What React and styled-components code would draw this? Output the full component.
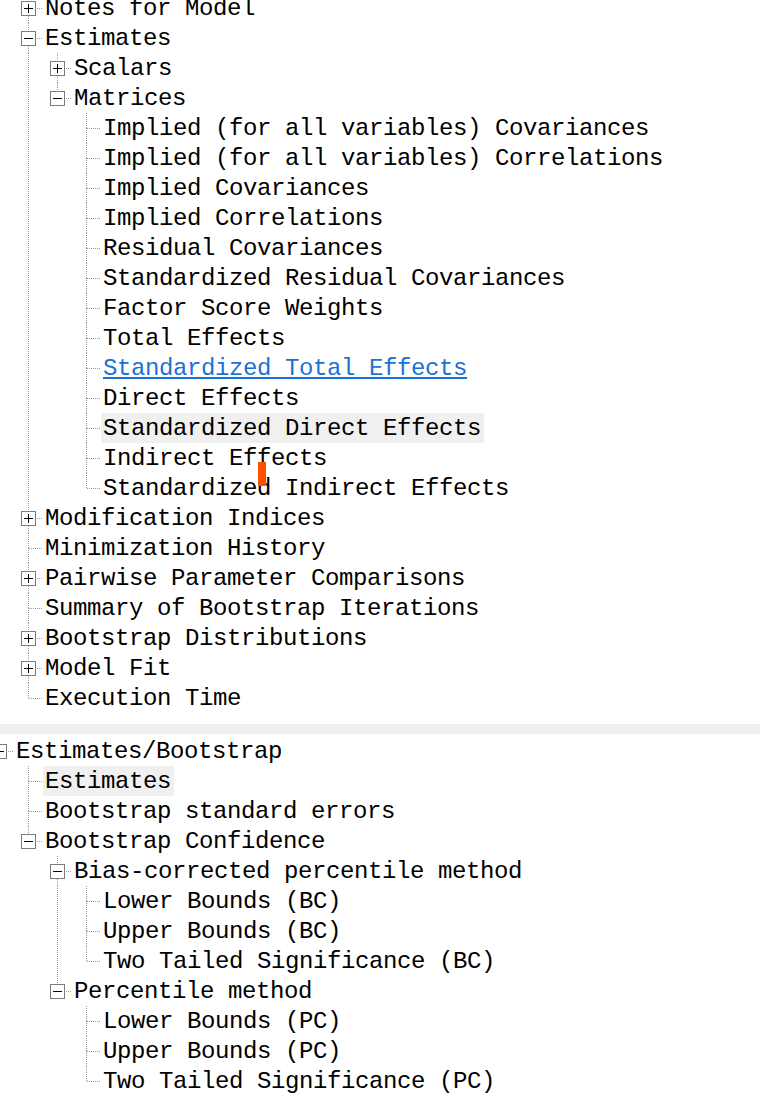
import React from 'react';
import styled, { createGlobalStyle } from 'styled-components';

const GlobalStyle = createGlobalStyle`
    html, body {
        margin: 0;
        padding: 0;
        background: #ffffff;
        overflow: hidden;
    }
`;

const Page = styled.div`
    position: relative;
    width: 760px;
    margin-top: -7px;
    font-family: 'Liberation Mono', 'DejaVu Sans Mono', monospace;
    font-size: 24px;
    letter-spacing: -0.4px;
    color: #000;
`;

const Tree = styled.div`
    display: flex;
    flex-direction: column;
    margin-left: ${(p) => p.$offset}px;
`;

const Row = styled.div`
    display: flex;
    flex-direction: row;
    align-items: flex-start;
    height: 30px;
    white-space: pre;
`;

const Cell = styled.svg`
    flex: none;
    display: block;
    width: 29px;
    height: 30px;
`;

const Label = styled.span`
    height: 30px;
    box-sizing: border-box;
    padding: 2px 3px 0 2px;
    line-height: 28px;
    background: ${(p) => (p.$state === 'selected' ? '#f0f0f0' : 'transparent')};
    color: ${(p) => (p.$state === 'hover' ? '#1a72d6' : '#000')};
    text-decoration: ${(p) => (p.$state === 'hover' ? 'underline' : 'none')};
    text-underline-offset: 2px;
`;

const Divider = styled.div`
    height: 10px;
    margin: 11px 0 2px;
    background: #f0f0f0;
`;

const Caret = styled.div`
    position: absolute;
    left: 258px;
    top: 469px;
    width: 8px;
    height: 24px;
    background: #ff5000;
`;

const LINE = '#9a9a9a';

const Gutter = ({ line }) => (
    <Cell viewBox="0 0 29 30">
        {line && <line x1="14.5" y1="0" x2="14.5" y2="30" stroke={LINE} strokeDasharray="1 1" />}
    </Cell>
);

const NodeCell = ({ hasPrev, hasNext, expander, open }) => (
    <Cell viewBox="0 0 29 30">
        {hasPrev && (
            <line x1="14.5" y1="0" x2="14.5" y2={expander ? 8 : 16} stroke={LINE} strokeDasharray="1 1" />
        )}
        {hasNext && (
            <line x1="14.5" y1={expander ? 23 : 15} x2="14.5" y2="30" stroke={LINE} strokeDasharray="1 1" />
        )}
        <line x1={expander ? 23 : 15} y1="15.5" x2="29" y2="15.5" stroke={LINE} strokeDasharray="1 1" />
        {expander && (
            <g>
                <rect x="7.5" y="8.5" width="14" height="14" fill="#fff" stroke="#7c7c7c" />
                <line x1="10" y1="15.5" x2="19" y2="15.5" stroke="#000" />
                {!open && <line x1="14.5" y1="11" x2="14.5" y2="20" stroke="#000" />}
            </g>
        )}
    </Cell>
);

const leaves = (names) => names.map((label) => (typeof label === 'string' ? { label } : label));

const firstTree = [
    { label: 'Notes for Model', closed: true },
    {
        label: 'Estimates',
        children: [
            { label: 'Scalars', closed: true },
            {
                label: 'Matrices',
                children: leaves([
                    'Implied (for all variables) Covariances',
                    'Implied (for all variables) Correlations',
                    'Implied Covariances',
                    'Implied Correlations',
                    'Residual Covariances',
                    'Standardized Residual Covariances',
                    'Factor Score Weights',
                    'Total Effects',
                    { label: 'Standardized Total Effects', state: 'hover' },
                    'Direct Effects',
                    { label: 'Standardized Direct Effects', state: 'selected' },
                    'Indirect Effects',
                    'Standardized Indirect Effects',
                ]),
            },
        ],
    },
    { label: 'Modification Indices', closed: true },
    { label: 'Minimization History' },
    { label: 'Pairwise Parameter Comparisons', closed: true },
    { label: 'Summary of Bootstrap Iterations' },
    { label: 'Bootstrap Distributions', closed: true },
    { label: 'Model Fit', closed: true },
    { label: 'Execution Time' },
];

const secondTree = [
    {
        label: 'Estimates/Bootstrap',
        children: [
            { label: 'Estimates', state: 'selected' },
            { label: 'Bootstrap standard errors' },
            {
                label: 'Bootstrap Confidence',
                children: [
                    {
                        label: 'Bias-corrected percentile method',
                        children: leaves([
                            'Lower Bounds (BC)',
                            'Upper Bounds (BC)',
                            'Two Tailed Significance (BC)',
                        ]),
                    },
                    {
                        label: 'Percentile method',
                        children: leaves([
                            'Lower Bounds (PC)',
                            'Upper Bounds (PC)',
                            'Two Tailed Significance (PC)',
                        ]),
                    },
                ],
            },
        ],
    },
];

// flatten nodes into rows, remembering which ancestor lines keep going
const flatten = (nodes, guides, rows, rootContinued) => {
    nodes.forEach((node, i) => {
        const last = i === nodes.length - 1;
        rows.push({
            ...node,
            guides,
            hasPrev: i > 0 || guides.length > 0 || rootContinued,
            hasNext: !last,
        });
        if (node.children) flatten(node.children, [...guides, !last], rows, false);
    });
    return rows;
};

const TreeView = ({ nodes, offset, continued }) => (
    <Tree $offset={offset}>
        {flatten(nodes, [], [], continued).map((row, i) => (
            <Row key={i}>
                {row.guides.map((g, j) => (
                    <Gutter key={j} line={g} />
                ))}
                <NodeCell
                    hasPrev={row.hasPrev}
                    hasNext={row.hasNext}
                    expander={row.closed || !!row.children}
                    open={!!row.children}
                />
                <Label $state={row.state}>{row.label}</Label>
            </Row>
        ))}
    </Tree>
);

const App = () => (
    <Page>
        <GlobalStyle />
        <TreeView nodes={firstTree} offset={14} continued />
        <Divider />
        <TreeView nodes={secondTree} offset={-15} />
        <Caret />
    </Page>
);

export default App;
